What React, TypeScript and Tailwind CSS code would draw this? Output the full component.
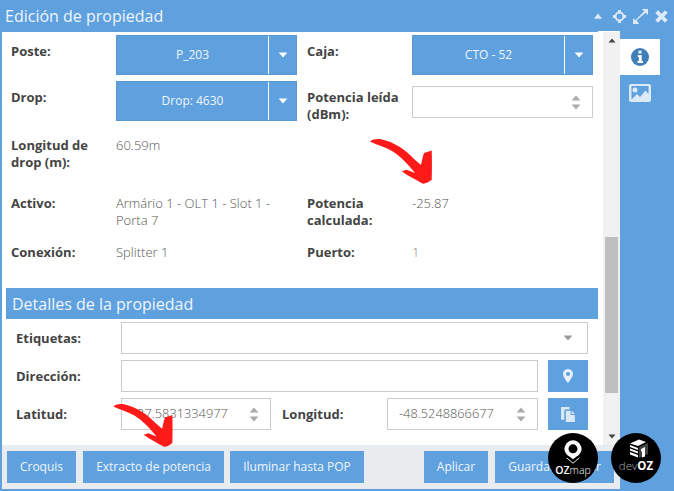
const blue = "bg-[#5fa0de]";

const Label = ({ children, className = "" }: { children: React.ReactNode; className?: string }) => (
  <div className={`text-[13px] leading-[17px] font-bold text-[#444] ${className}`}>{children}</div>
);

const Value = ({ children, className = "" }: { children: React.ReactNode; className?: string }) => (
  <div className={`text-[13px] leading-[17px] font-light text-[#555] ${className}`}>{children}</div>
);

const Caret = ({ className = "" }: { className?: string }) => (
  <svg viewBox="0 0 10 6" className={className} fill="currentColor">
    <path d="M0.6 0.4h8.8L5 5.6z" />
  </svg>
);

const Spinner = () => (
  <div className="flex flex-col gap-[3px] text-[#aaa]">
    <Caret className="w-[10px] h-[6px] rotate-180" />
    <Caret className="w-[10px] h-[6px]" />
  </div>
);

const SelectBtn = ({ text }: { text: string }) => (
  <div className="w-[181px] h-10 bg-[#5fa0de] border border-[#5a98d3] flex items-center text-white/90 text-[12px]">
    <div className="flex-1 text-center">{text}</div>
    <div className="w-[28px] h-full border-l border-white flex items-center justify-center">
      <Caret className="w-[10px] h-[6px] text-white" />
    </div>
  </div>
);

const NumberInput = ({ value, className = "" }: { value?: string; className?: string }) => (
  <div className={`h-8 border border-[#ccc] bg-white flex items-center justify-between pl-[11px] pr-[11px] text-[12.8px] font-light text-[#555] ${className}`}>
    <span>{value}</span>
    <Spinner />
  </div>
);

const FooterBtn = ({ text, className = "" }: { text: string; className?: string }) => (
  <div className={`h-8 bg-[#5fa0de] text-white/90 text-[12px] flex items-center justify-center ${className}`}>{text}</div>
);

const RedArrow = ({ className = "" }: { className?: string }) => (
  <svg viewBox="0 0 62 45" className={className} fill="#ff1a1a">
    <path d="M0 2.500C3 0 8-.5 12 .5C24 3 36 11 44 20L51 26C52 21 53 17 54 14L61.700 11.500C62 21 62 31 61.700 40.700C59 43 56 44.500 53 44.700C46 41 38 37 31.700 32.300L36.700 30.700L45 34C38 25 30 17 22 12C15 8 7 6 0 2.500Z" />
  </svg>
);

export default function App() {
  return (
    <div className={`relative w-[674px] h-[491px] ${blue} overflow-hidden flex flex-col font-['Open_Sans',sans-serif]`}>
      <div className="h-8 shrink-0 flex items-center justify-between pl-[5px] pr-[6px]">
        <span className="text-[16px] text-white/90">Edición de propiedad</span>
        <div className="flex items-center text-[#dce9f6]">
          <svg viewBox="0 0 12 8" className="w-[10px] h-[6px]" fill="currentColor"><path d="M6 .5 11.500 7.500H.5z" /></svg>
          <svg viewBox="0 0 16 16" className="w-[15px] h-[15px] ml-[9px]" fill="none" stroke="currentColor" strokeWidth="2.200">
            <circle cx="8" cy="8" r="4.200" />
            <path d="M8 4 8 1M8 12v3M4 8H1M12 8h3" strokeWidth="3" />
          </svg>
          <svg viewBox="0 0 16 16" className="w-[15px] h-[15px] ml-[6px]" fill="currentColor">
            <path d="M9.500 0H16V6.500L13.500 4 4 12 6.500 16H0V9.500L2.500 12 12 2.500z" />
          </svg>
          <svg viewBox="0 0 12 12" className="w-[13px] h-[13px] ml-[7px]" stroke="currentColor" strokeWidth="3.500"><path d="M1.500 1.500l9 9M10.500 1.500l-9 9" /></svg>
        </div>
      </div>

      <div className="flex flex-1 min-h-0">
        <div className="ml-[2px] w-[618px] flex flex-col mb-[2px] min-h-0">
          <div className="flex flex-1 min-h-0 bg-white">
            <div className="w-[601px] flex flex-col pt-[3px]">
              <div className="flex pl-[9px]">
                <Label className="w-[105px] pt-2">Poste:</Label>
                <SelectBtn text="P_203" />
                <Label className="w-[105px] ml-[10px] pt-2">Caja:</Label>
                <SelectBtn text="CTO - 52" />
              </div>
              <div className="flex pl-[9px] mt-[6px]">
                <Label className="w-[105px] pt-2">Drop:</Label>
                <SelectBtn text="Drop: 4630" />
                <Label className="w-[105px] ml-[10px] pt-2">Potencia leída (dBm):</Label>
                <NumberInput className="w-[181px] mt-[5px]" />
              </div>
              <div className="flex pl-[9px] mt-[14px]">
                <Label className="w-[105px]">Longitud de drop (m):</Label>
                <Value>60.59m</Value>
              </div>
              <div className="flex pl-[9px] mt-6">
                <Label className="w-[105px]">Activo:</Label>
                <Value className="w-[181px]">Armário 1 - OLT 1 - Slot 1 - Porta 7</Value>
                <Label className="w-[105px] ml-[10px]">Potencia calculada:</Label>
                <Value>-25.87</Value>
              </div>
              <div className="flex pl-[9px] mt-[15px]">
                <Label className="w-[105px]">Conexión:</Label>
                <Value className="w-[181px]">Splitter 1</Value>
                <Label className="w-[105px] ml-[10px]">Puerto:</Label>
                <Value className="text-[#888]">1</Value>
              </div>
              <div className={`ml-1 mt-[27px] w-[592px] h-[31px] ${blue} flex items-center pl-[6px] text-[16px] text-white/90`}>
                Detalles de la propiedad
              </div>
              <div className="flex items-center pl-[14px] mt-[3px]">
                <Label className="w-[105px]">Etiquetas:</Label>
                <div className="w-[467px] h-8 border border-[#ccc] flex items-center justify-end pr-[14px] text-[#999]">
                  <Caret className="w-[10px] h-[6px]" />
                </div>
              </div>
              <div className="flex items-center pl-[14px] mt-[6px]">
                <Label className="w-[105px]">Dirección:</Label>
                <div className="w-[417px] h-8 border border-[#ccc]" />
                <div className={`ml-[10px] w-10 h-8 ${blue} flex items-center justify-center text-[#e6f0fa]`}>
                  <svg viewBox="0 0 10 14" className="w-[10px] h-[14px]" fill="currentColor">
                    <path fillRule="evenodd" d="M5 0a5 5 0 0 1 5 5c0 2.500-3 6.500-5 9-2-2.500-5-6.500-5-9a5 5 0 0 1 5-5zm0 3a2 2 0 1 0 0 4 2 2 0 0 0 0-4z" />
                  </svg>
                </div>
              </div>
              <div className="flex items-center pl-[14px] mt-[6px]">
                <Label className="w-[105px]">Latitud:</Label>
                <NumberInput value="-27.5831334977" className="w-[150px]" />
                <Label className="w-[105px] ml-[11px]">Longitud:</Label>
                <NumberInput value="-48.5248866677" className="w-[151px]" />
                <div className={`ml-[10px] w-10 h-8 ${blue} flex items-center justify-center text-[#dce9f6]`}>
                  <svg viewBox="0 0 16 16" className="w-[17px] h-[17px]" fill="currentColor">
                    <path d="M1 1h8v2H5.500A1.500 1.500 0 0 0 4 4.500V13H1z" />
                    <path d="M5.500 4.500H10v4h4V15H5.500zM11 4.500l3 3h-3z" />
                  </svg>
                </div>
              </div>
            </div>
            <div className="relative w-[17px] bg-[#f1f1f1] flex flex-col items-center">
              <div className="absolute -top-[1px] -left-[5px] w-[22px] h-[1px] bg-white" />
              <Caret className="w-[8px] h-[5px] mt-[6px] rotate-180 text-[#444]" />
              <div className="absolute left-[2px] right-[2px] top-[205px] h-[156px] bg-[#bfbfbf]" />
              <Caret className="absolute bottom-[6px] w-[8px] h-[5px] text-[#444]" />
            </div>
          </div>
          <div className="h-[44px] shrink-0 bg-[#e8ecef] flex items-center pl-[5px]">
            <FooterBtn text="Croquis" className="w-[69px]" />
            <FooterBtn text="Extracto de potencia" className="w-[141px] ml-[7px]" />
            <FooterBtn text="Iluminar hasta POP" className="w-[134px] ml-[6px]" />
            <FooterBtn text="Aplicar" className="w-16 ml-[60px]" />
            <FooterBtn text="Guardar y cerrar" className="w-[119px] ml-[7px]" />
          </div>
        </div>
        <div className="flex-1 pt-[7px]">
          <div className="w-10 h-9 bg-white flex items-center justify-center text-[#3f7eb8]">
            <svg viewBox="0 0 18 18" className="w-[18px] h-[18px]">
              <circle cx="9" cy="9" r="9" fill="currentColor" />
              <path d="M7.500 2.800h3v2.700h-3zM6.800 7h3.900v6h1.300v2H6.500v-2h1.300V9H6.800z" fill="#fff" />
            </svg>
          </div>
          <div className="w-10 h-9 flex items-center justify-center text-[#dce9f6]">
            <svg viewBox="0 0 22 18" className="w-[22px] h-[18px]" fill="currentColor">
              <path fillRule="evenodd" d="M2 0h18a2 2 0 0 1 2 2v14a2 2 0 0 1-2 2H2a2 2 0 0 1-2-2V2a2 2 0 0 1 2-2zm.5 2v13.500L8 10l3 3 5.500-6.500 3 3.500V2zM6 3.500a2.500 2.500 0 1 1 0 5 2.500 2.500 0 0 1 0-5z" />
            </svg>
          </div>
        </div>
      </div>

      <RedArrow className="absolute left-[370px] top-[139px] w-[62px] h-[45px]" />
      <RedArrow className="absolute left-[113px] top-[404px] w-[60px] h-[43px]" />

      <div className="absolute left-[548px] top-[433px] w-[50px] h-[50px] rounded-full bg-black flex flex-col items-center text-white">
        <svg viewBox="0 0 20 26" className="w-[18px] h-[26px] mt-[6px]" fill="none">
          <path fillRule="evenodd" fill="#fff" d="M10 0a9.500 9.500 0 0 1 4 18.100L10 21l-4-2.900A9.500 9.500 0 0 1 10 0zm0 4.500a5 5 0 1 0 0 10 5 5 0 0 0 0-10z" />
          <path d="M3 19.500l7 6 7-6" stroke="#fff" strokeWidth="1" />
        </svg>
        <span className="text-[10.5px] leading-[12px] -mt-[1px]"><span className="font-semibold">OZ</span><span className="font-light">map</span></span>
      </div>
      <div className="absolute left-[611px] top-[433px] w-[50px] h-[50px] rounded-full bg-black flex flex-col items-center text-white">
        <svg viewBox="0 0 20 19" className="w-5 h-[19px] mt-[6px] ml-[6px]">
          <path d="M1 4.500 10 .5l7 2.500-8 4z" fill="#fff" />
          <path d="M1 6l8 3v2L1 8zM1 9.500l8 3v2l-8-3zM1 13l8 3v2.500l-8-3z" fill="#fff" />
          <path d="M10 8l9-4v11l-9 4z" fill="#444" />
          <path d="M13 9.500l3-1.500v9.500l-3 1V12l-1 .5v-2z" fill="#fff" />
        </svg>
        <span className="text-[11.5px] leading-[14px] mt-[1px]"><span className="font-light text-[#aaa]">dev</span><span className="font-bold">OZ</span></span>
      </div>
    </div>
  );
}
